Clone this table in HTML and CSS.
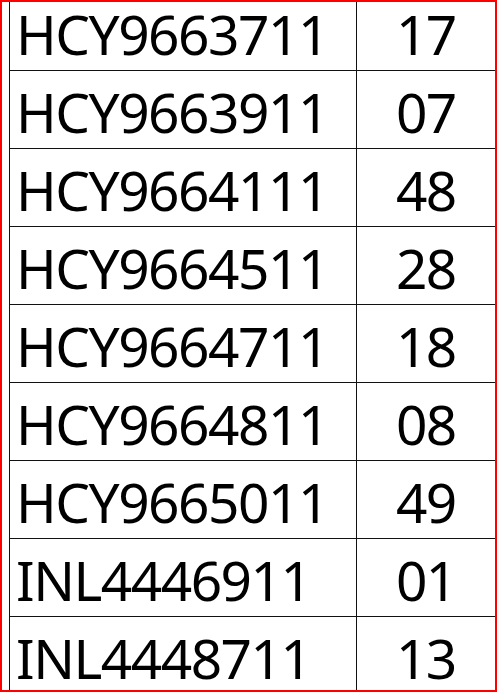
FILE: index.html
```html
<!DOCTYPE html>
<html>
<head>
<meta charset="utf-8">
<link rel="stylesheet" href="styles.css">
</head>
<body>
<div class="frame">
  <table class="grid">
    <tr><td class="code">HCY9663711</td><td class="num">17</td></tr>
    <tr><td class="code">HCY9663911</td><td class="num">07</td></tr>
    <tr><td class="code">HCY9664111</td><td class="num">48</td></tr>
    <tr><td class="code">HCY9664511</td><td class="num">28</td></tr>
    <tr><td class="code">HCY9664711</td><td class="num">18</td></tr>
    <tr><td class="code">HCY9664811</td><td class="num">08</td></tr>
    <tr><td class="code">HCY9665011</td><td class="num">49</td></tr>
    <tr><td class="code">INL4446911</td><td class="num">01</td></tr>
    <tr><td class="code">INL4448711</td><td class="num">13</td></tr>
  </table>
</div>
</body>
</html>
```
FILE: styles.css
```css
html, body {
  margin: 0;
  padding: 0;
  background: #ffffff;
}
.frame {
  width: 493px;
  height: 688px;
  border: 2px solid #ff0000;
  overflow: hidden;
  background: #ffffff;
}
.grid {
  border-collapse: collapse;
  margin: -10px 0 0 7px;
  table-layout: fixed;
  width: 487px;
}
.grid td {
  border: 1px solid #111111;
  height: 78px;
  padding: 0 0 9px 0;
  box-sizing: border-box;
  vertical-align: bottom;
  font-family: "Noto Sans", "Open Sans", sans-serif;
  font-size: 55px;
  line-height: 55px;
  letter-spacing: -1.5px;
  color: #000000;
  white-space: nowrap;
}
.grid td.code {
  width: 346px;
  padding-left: 6px;
}
.grid td.num {
  width: 139px;
  text-align: center;
}
```
